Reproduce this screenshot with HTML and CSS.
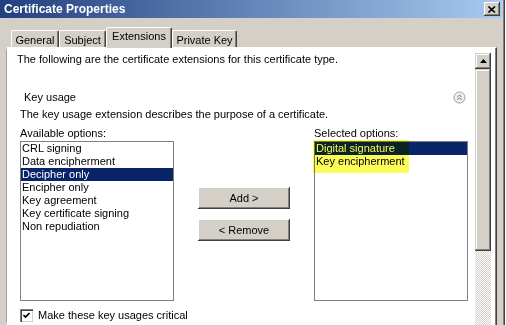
FILE: index.html
```html
<!DOCTYPE html>
<html lang="en">
<head>
    <meta charset="UTF-8">
    <meta name="viewport" content="width=device-width, initial-scale=1.0">
    <title>Certificate Properties</title>
    <link rel="stylesheet" href="styles.css">
</head>
<body>
    <div class="window">
        <div class="titlebar">
            <span class="title">Certificate Properties</span>
            <button class="close" aria-label="Close">
                <svg width="8" height="7" viewBox="0 0 8 7">
                    <path d="M0.5 0.5 L7 6.5 M7 0.5 L0.5 6.5" stroke="#000" stroke-width="1.6" fill="none"/>
                </svg>
            </button>
        </div>

        <div class="tabs">
            <div class="tab tab-general">General</div>
            <div class="tab tab-subject">Subject</div>
            <div class="tab tab-ext active">Extensions</div>
            <div class="tab tab-key">Private Key</div>
        </div>

        <div class="panel">
            <div class="content">
                <p class="intro">The following are the certificate extensions for this certificate type.</p>

                <div class="section-head">
                    <span>Key usage</span>
                    <svg class="collapse" width="13" height="13" viewBox="0 0 13 13">
                        <circle cx="6.5" cy="6.5" r="5.5" fill="#f2f2f2" stroke="#9c9c9c"/>
                        <path d="M4.3 6.2 L6.5 4 L8.7 6.2 M4.3 9 L6.5 6.8 L8.7 9" stroke="#6e6e6e" stroke-width="1" fill="none"/>
                    </svg>
                </div>
                <p class="desc">The key usage extension describes the purpose of a certificate.</p>

                <div class="options">
                    <div class="col">
                        <div class="label">Available options:</div>
                        <ul class="list">
                            <li>CRL signing</li>
                            <li>Data encipherment</li>
                            <li class="selected">Decipher only</li>
                            <li>Encipher only</li>
                            <li>Key agreement</li>
                            <li>Key certificate signing</li>
                            <li>Non repudiation</li>
                        </ul>
                    </div>

                    <div class="actions">
                        <button class="btn">Add &gt;</button>
                        <button class="btn">&lt; Remove</button>
                    </div>

                    <div class="col selected-col">
                        <div class="label">Selected options:</div>
                        <ul class="list">
                            <li class="selected">Digital signature</li>
                            <li>Key encipherment</li>
                        </ul>
                        <div class="marker"></div>
                    </div>
                </div>

                <label class="check">
                    <span class="box">
                        <svg width="7" height="7" viewBox="0 0 7 7">
                            <path d="M0.5 3 L2.5 5 L6.5 1" stroke="#000" stroke-width="1.6" fill="none"/>
                        </svg>
                    </span>
                    Make these key usages critical
                </label>
            </div>

            <div class="scrollbar">
                <div class="sb-btn">
                    <svg width="7" height="4" viewBox="0 0 7 4"><path d="M0 4 L3.5 0 L7 4 Z" fill="#000"/></svg>
                </div>
                <div class="sb-thumb"></div>
                <div class="sb-track"></div>
            </div>
        </div>
    </div>
</body>
</html>
```

FILE: styles.css
```css
* {
    box-sizing: border-box;
}

body {
    margin: 0;
    background: #ffffff;
    font-family: "Liberation Sans", Arial, sans-serif;
    font-size: 11px;
    color: #000;
    overflow: hidden;
}

.window {
    width: 505px;
    height: 325px;
    background-color: #d4d0c8;
    box-shadow: inset -1px 0 #404040, inset -2px 0 #808080;
    display: flex;
    flex-direction: column;
    overflow: hidden;
}

.titlebar {
    height: 18px;
    margin-right: 3px;
    padding-left: 4px;
    display: flex;
    align-items: center;
    background: linear-gradient(to right, #22407f, #a6caf0);
}

.title {
    color: #fff;
    font-weight: bold;
    font-size: 12px;
}

.close {
    margin-left: auto;
    margin-right: 2px;
    width: 16px;
    height: 14px;
    padding: 0;
    border: none;
    display: flex;
    align-items: center;
    justify-content: center;
    background-color: #d4d0c8;
    box-shadow: inset -1px -1px #404040, inset 1px 1px #fff, inset -2px -2px #808080;
}

.tabs {
    display: flex;
    align-items: flex-end;
    height: 29px;
    padding-left: 11px;
    position: relative;
    z-index: 1;
}

.tab {
    height: 17px;
    padding-top: 3px;
    line-height: 13px;
    text-align: center;
    background-color: #d4d0c8;
    border-top: 1px solid #fff;
    border-left: 1px solid #fff;
    border-right: 1px solid #404040;
    border-radius: 2px 2px 0 0;
    box-shadow: inset -1px 0 #808080;
}

.tab-general { width: 48px; }
.tab-subject { width: 47px; }
.tab-ext { width: 66px; }
.tab-key { width: 65px; }

.tab.active {
    height: 21px;
    margin-bottom: -1px;
    padding-top: 2px;
}

.panel {
    flex: 1;
    margin-left: 7px;
    margin-right: 8px;
    display: flex;
    background-color: #fff;
    border-top: 1px solid #fff;
    border-left: 1px solid #fff;
    border-right: 1px solid #404040;
    box-shadow: inset -1px 0 #808080, -4px 0 0 -3px #a0a0a0;
}

.content {
    flex: 1;
}

p {
    margin: 0;
    line-height: 13px;
}

.intro {
    margin-top: 5px;
    padding-left: 9px;
}

.section-head {
    margin-top: 25px;
    padding-left: 16px;
    height: 13px;
    line-height: 13px;
    display: flex;
    align-items: center;
}

.collapse {
    margin-left: auto;
    margin-right: 9px;
    margin-top: -1px;
}

.desc {
    margin-top: 4px;
    padding-left: 12px;
}

.options {
    margin-top: 6px;
    padding-left: 12px;
    display: flex;
    gap: 24px;
}

.col {
    width: 154px;
}

.selected-col {
    position: relative;
}

.label {
    height: 14px;
    line-height: 13px;
}

.list {
    list-style: none;
    margin: 0;
    padding: 0;
    height: 160px;
    border: 1px solid #808080;
}

.list li {
    height: 13px;
    line-height: 13px;
    padding-left: 1px;
    white-space: nowrap;
}

.list li.selected {
    background-color: #0a246a;
    color: #fff;
}

.marker {
    position: absolute;
    left: -1px;
    top: 13px;
    width: 96px;
    height: 33px;
    background-color: #fbfb5a;
    mix-blend-mode: multiply;
}

.actions {
    width: 92px;
    padding-top: 60px;
    display: flex;
    flex-direction: column;
    gap: 10px;
}

.btn {
    height: 22px;
    padding: 0;
    border: none;
    font-family: "Liberation Sans", Arial, sans-serif;
    font-size: 11px;
    color: #000;
    background-color: #d4d0c8;
    box-shadow: inset -1px -1px #404040, inset 1px 1px #fff, inset -2px -2px #808080;
}

.check {
    margin-top: 8px;
    padding-left: 12px;
    display: flex;
    align-items: center;
    gap: 5px;
    line-height: 13px;
}

.box {
    width: 13px;
    height: 13px;
    display: flex;
    align-items: center;
    justify-content: center;
    background-color: #fff;
    box-shadow: inset 1px 1px #808080, inset 2px 2px #404040, inset -1px -1px #d4d0c8;
}

.scrollbar {
    width: 16px;
    margin-top: 5px;
    margin-right: 5px;
    display: flex;
    flex-direction: column;
}

.sb-btn, .sb-thumb {
    background-color: #d4d0c8;
    box-shadow: inset -1px -1px #404040, inset 1px 1px #d4d0c8, inset -2px -2px #808080, inset 2px 2px #fff;
}

.sb-btn {
    height: 16px;
    display: flex;
    align-items: center;
    justify-content: center;
}

.sb-thumb {
    height: 182px;
}

.sb-track {
    flex: 1;
    background-color: #fff;
    background-image: repeating-conic-gradient(#d4d0c8 0 25%, #fff 0 50%);
    background-size: 2px 2px;
}
```
